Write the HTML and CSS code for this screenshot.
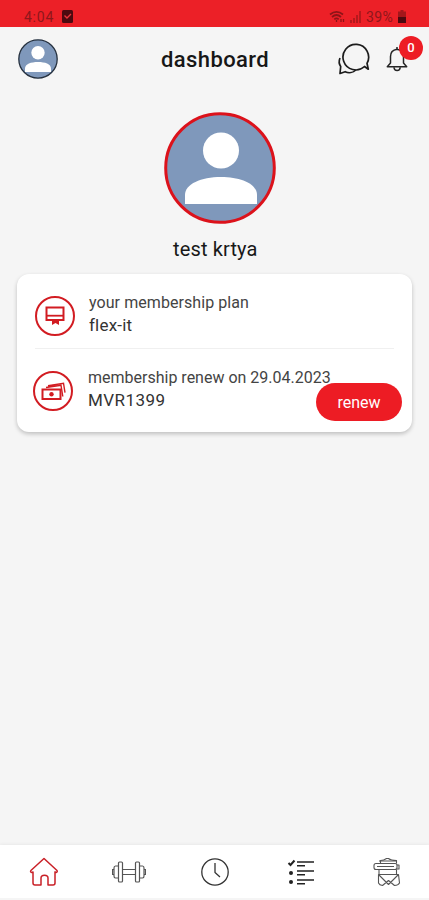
FILE: index.html
```html
<!DOCTYPE html>
<html lang="en">
<head>
<meta charset="utf-8">
<meta name="viewport" content="width=device-width, initial-scale=1">
<title>dashboard</title>
<link rel="stylesheet" href="styles.css">
</head>
<body>
<div class="app">
  <div class="status">
    <span class="time">4:04</span>
    <svg class="check" width="11" height="13" viewBox="0 0 11 13"><rect width="11" height="13" rx="1.5" fill="#4c0a10"/><path d="M2.5 5.5l2.5 2.5 4-4" fill="none" stroke="#e9363c" stroke-width="1.4"/></svg>
    <svg class="wifi" width="16" height="14" viewBox="0 0 16 14" fill="none" stroke="#8c1418" stroke-width="1.7"><path d="M1 4.500Q7.500-.8 14 4.500M3 7Q7.500 3 12 7M5.300 9.300Q7.500 7.500 9.700 9.300"/><path d="M7.500 10v2M12 9v3M14.500 9v3" stroke-width="1.300"/></svg>
    <svg class="signal" width="11" height="13" viewBox="0 0 11 13" stroke="#a3171b" stroke-width="1.500"><path d="M1 13v-3M4 13V8M7 13V5M10 13V1"/></svg>
    <span class="percent">39%</span>
    <svg class="battery" width="8" height="13" viewBox="0 0 8 13"><path d="M2.500 0h3v1.500H8V13H0V1.500h2.500z" fill="#a3171b"/><path d="M0 7h8v6H0z" fill="#4c0a10"/></svg>
  </div>
  <header class="header">
    <svg class="avatar-small" width="40" height="40" viewBox="0 0 40 40"><circle cx="20" cy="20" r="19.200" fill="#7f98bb" stroke="#26313f" stroke-width="1.300"/><circle cx="20" cy="13.800" r="6.700" fill="#fff"/><path d="M7 33v-3.500C7 25 13 23 20 23s13 2 13 6.500V33z" fill="#fff"/></svg>
    <h1 class="title">dashboard</h1>
    <svg class="chat" width="34" height="34" viewBox="0 0 34 34" fill="none" stroke="#1c1c1c" stroke-width="1.700" stroke-linejoin="round"><path d="M27.500 24.500A12.800 12.800 0 1 1 30 21.300L31.300 27.200Z"/><path d="M3 16c-1.300 3-1 6 .7 8.500L3 31.500l5.200-1.800c3.500 1.700 8 1 10.600-1.700"/></svg>
    <div class="alerts">
      <svg width="24" height="26" viewBox="0 0 24 26" fill="none" stroke="#252525" stroke-width="1.500" stroke-linejoin="round"><path d="M4.500 17V10.500C4.500 6 7 3.800 11 3.200c4 .6 6.500 2.800 6.500 7.300V17l3.200 3.700H1.300Z"/><path d="M11 3V1M8 21.200c.2 4.300 6 4.300 6.200 0"/></svg>
      <span class="badge">0</span>
    </div>
  </header>
  <main class="main">
    <svg class="avatar-large" width="112" height="112" viewBox="0 0 112 112"><circle cx="56" cy="56" r="54.300" fill="#7f98bb" stroke="#dc121b" stroke-width="3"/><circle cx="57" cy="38.500" r="18" fill="#fff"/><path d="M21 92V83C21 72 37 65 57 65s36 7 36 18v9z" fill="#fff"/></svg>
    <div class="name">test krtya</div>
    <section class="card">
      <div class="row plan">
        <svg class="ring" width="40" height="40" viewBox="0 0 40 40" fill="none" stroke="#d21c22"><circle cx="20" cy="20" r="19" stroke-width="2"/><path d="M11.500 11.500h17v12.500h-17z" stroke-width="2"/><path d="M11 19.700h18" stroke-width="1.800"/><path d="M17 24h7v5l-3.500-2-3.500 2z" fill="#d21c22" stroke="none"/></svg>
        <div class="copy"><div class="label plan-label">your membership plan</div><div class="value plan-value">flex-it</div></div>
      </div>
      <div class="row renewal">
        <svg class="ring" width="40" height="40" viewBox="0 0 40 40" fill="none" stroke="#d21c22"><circle cx="20" cy="20" r="19" stroke-width="2"/><path d="M9.500 18.500h18V28h-18z" stroke-width="2"/><circle cx="18.500" cy="23.300" r="2.200" fill="#d21c22" stroke="none"/><path d="M13 16.500l15-2.300 1.800 11.300M15 14.800l15.500-2.600 1.500 9.500" stroke-width="1.400"/></svg>
        <div class="copy"><div class="label renew-label">membership renew on 29.04.2023</div><div class="value renew-value">MVR1399</div></div>
        <button class="renew">renew</button>
      </div>
    </section>
  </main>
  <nav class="nav">
    <a class="tab"><svg width="30" height="30" viewBox="0 0 30 30" fill="none" stroke="#c92027" stroke-width="1.500" stroke-linejoin="round"><path d="M15 1.500 28 13.500c.8.900-.4 2.400-1.500 1.700l-.5-.3V26q0 2-2 2h-5V21q0-2.800-3.500-2.800T12 21v7H6q-2 0-2-2V14.900l-.8.400c-1 .6-2.200-.9-1.300-1.800Z"/></svg></a>
    <a class="tab"><svg width="34" height="30" viewBox="0 0 34 30" fill="none" stroke="#555" stroke-width="1.200"><rect x="6.500" y="5" width="4" height="20" rx="1"/><rect x="23.500" y="5" width="4" height="20" rx="1"/><path d="M10.500 12.500h13M10.500 17.500h13M6 9H3.500Q2 9 2 11v8q0 2 1.500 2H6M28 9h2.500Q32 9 32 11v8q0 2-1.500 2H28M2 12.500H.5v5H2M32 12.500h1.500v5H32"/></svg></a>
    <a class="tab"><svg width="30" height="30" viewBox="0 0 30 30" fill="none" stroke="#333" stroke-width="1.300"><circle cx="15" cy="15" r="13.200"/><path d="M15 6v9.500l5 4.500"/></svg></a>
    <a class="tab"><svg width="30" height="30" viewBox="0 0 30 30" fill="none" stroke="#222"><path d="M2.500 6l2 2 4-4.500" stroke-width="2"/><path d="M11 5h17M11 14h17M11 23h17" stroke-width="1.700"/><path d="M11 8.800h8M11 17.800h8M11 26.800h8" stroke-width="1.500"/><circle cx="5" cy="16" r="2" fill="#222" stroke="none"/><circle cx="5" cy="25" r="2" fill="#222" stroke="none"/></svg></a>
    <a class="tab"><svg width="30" height="30" viewBox="0 0 30 30" fill="none" stroke="#555" stroke-width="1.100" stroke-linejoin="round"><path d="M9.500 6.500V3.500q3.500 0 6-2h2q2.500 2 8 2v3"/><rect x="3" y="6.500" width="23" height="6" rx="2"/><path d="M8 4h18M6 9.500h17M26 8h2v4h-2M8 12.500v5M25.500 12.500v5"/><path d="M7.500 17.500h20l1 8.500q-1.500 2.500-5 2.500l-6-5-6 5q-3-.3-4-2.500zM8 18l9.500 9.500 9.500-9.500"/></svg></a>
  </nav>
</div>
</body>
</html>
```
FILE: styles.css
```css
* { box-sizing: border-box; }
body { margin: 0; font-family: Roboto, sans-serif; background: #f5f5f5; }
svg { display: block; flex: none; }
.app { display: flex; flex-direction: column; height: 900px; overflow: hidden; }
.status { display: flex; align-items: center; height: 27px; padding: 6px 23px 0 24px; background: #ec2027; color: #8e171b; font-size: 14px; line-height: 20px; }
.time { width: 38px; letter-spacing: .75px; }
.wifi { margin-left: auto; }
.signal { margin-left: 5px; }
.percent { margin-left: 5px; width: 29px; letter-spacing: .4px; }
.battery { margin-left: 3px; }
.header { display: grid; grid-template-columns: 40px 1fr 34px 26px; align-items: center; height: 64px; padding: 0 17px 0 18px; }
.title { margin: 2px 0 0 103px; font-size: 22px; font-weight: 500; line-height: 28px; letter-spacing: .4px; color: #171717; }
.chat { margin-left: -15px; }
.alerts { position: relative; }
.badge { position: absolute; left: 13px; top: -10px; width: 24px; height: 24px; border-radius: 50%; background: #ed1c24; color: #fff; font-size: 13px; font-weight: 500; line-height: 24px; text-align: center; }
.main { flex: 1; padding: 21px 17px 0; }
.avatar-large { margin-left: 147px; }
.name { margin: 12px 0 0 156px; font-size: 20px; line-height: 26px; letter-spacing: .15px; color: #181818; }
.card { height: 158px; margin-top: 12px; padding: 0 18px; background: #fff; border-radius: 12px; box-shadow: 0 2px 4px rgba(0,0,0,.22); }
.row { display: flex; align-items: flex-start; }
.copy { margin-left: 14px; white-space: nowrap; }
.label { font-size: 16px; line-height: 22px; color: #444; }
.plan-label { letter-spacing: .07px; }
.value { font-size: 17px; line-height: 23px; color: #333; }
.plan-value { letter-spacing: .2px; }
.renew-value { letter-spacing: .45px; }
.plan { height: 75px; padding-top: 18px; border-bottom: 1px solid #f0f0f0; }
.plan .ring { margin-top: 4px; }
.renewal { position: relative; padding-top: 18px; margin-left: -2px; }
.renewal .ring { margin-top: 4px; }
.renewal .copy { margin-left: 15px; }
.renew { position: absolute; left: 283px; top: 34px; width: 86px; height: 38px; border: 0; padding: 1px 0 0; border-radius: 19px; background: #ed1c24; color: #fff; font: 16px/37px Roboto, sans-serif; }
.nav { display: grid; grid-template-columns: repeat(5, 1fr); height: 55px; padding-left: 1px; background: #fff; border-bottom: 2px solid #f5f5f5; box-shadow: 0 -1px 3px rgba(0,0,0,.05); }
.tab { display: flex; align-items: center; justify-content: center; }
```
